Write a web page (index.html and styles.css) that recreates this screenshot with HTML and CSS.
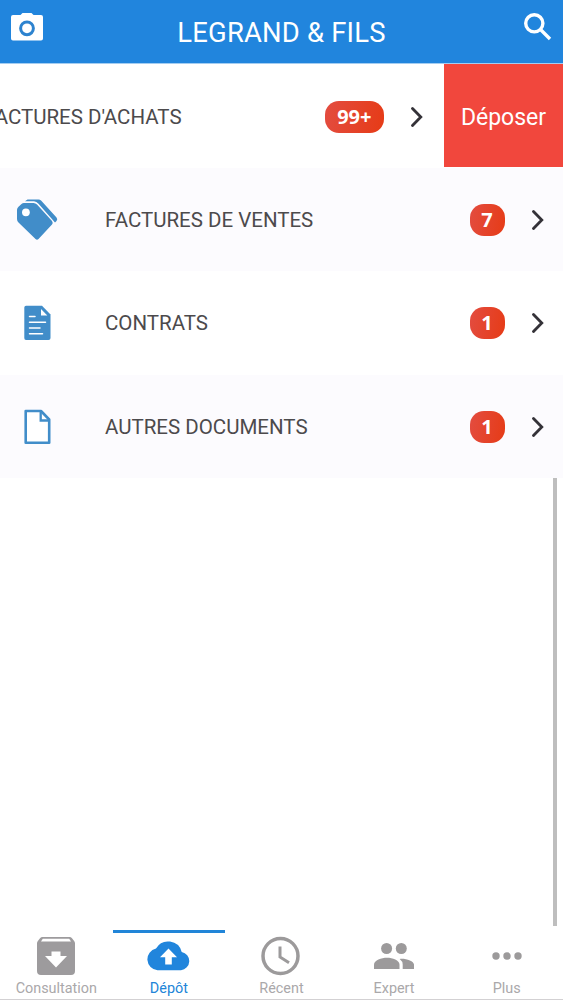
FILE: index.html
```
<!DOCTYPE html>
<html lang="fr">
<head>
    <meta charset="UTF-8">
    <meta name="viewport" content="width=device-width, initial-scale=1.0">
    <title>Legrand & Fils</title>
    <link rel="stylesheet" href="styles.css">
</head>
<body>
    <div class="app">
        <header class="header">
            <svg class="camera" viewBox="0 0 32 28">
                <path fill="#fff" d="M2 2H9.500L11.500 0H20.500L22.500 2H30Q32 2 32 4V25.500Q32 27.500 30 27.500H2Q0 27.500 0 25.500V4Q0 2 2 2Z"/>
                <circle cx="16" cy="15.300" r="6.400" fill="none" stroke="#2d83cf" stroke-width="3"/>
            </svg>
            <h1>LEGRAND &amp; FILS</h1>
            <svg class="search" viewBox="0 0 28 28">
                <circle cx="10.300" cy="10.300" r="8.600"/>
                <path d="M16.500 16.500L26 26"/>
            </svg>
        </header>

        <main class="content">
            <div class="row swiped">
                <div class="icon"></div>
                <span class="label">FACTURES D'ACHATS</span>
                <span class="badge">99+</span>
                <svg class="arrow" viewBox="0 0 12 20"><path d="M1.500 1.500L9.800 10L1.500 18.500"/></svg>
                <a class="drop">Déposer</a>
            </div>
            <div class="row">
                <div class="icon">
                    <svg width="42" height="42" viewBox="0 0 42 42">
                        <path fill="#418dc9" d="M9 2.200L11.500 .4H22.500Q24 .4 25.300 1.700L40.500 18.500Q42 20.300 40.500 22L39 23.500L22.500 4.700Q20.500 2.200 18 2.200Z"/>
                        <path fill="#418dc9" d="M8 4H17.500Q19.500 4 21 5.500L36 22Q37.500 24 36 25.500L22.500 40Q21 41.500 19.500 40L2.500 23.500Q1 22 1 20V11Q1 9 2.500 7.800L5.500 5Q6.500 4 8 4Z"/>
                        <circle cx="9.900" cy="13.300" r="3.900" fill="#fff"/>
                    </svg>
                </div>
                <span class="label">FACTURES DE VENTES</span>
                <span class="badge">7</span>
                <svg class="arrow" viewBox="0 0 12 20"><path d="M1.500 1.500L9.800 10L1.500 18.500"/></svg>
            </div>
            <div class="row">
                <div class="icon">
                    <svg width="27" height="36" viewBox="0 0 27 36">
                        <path fill="#418dc9" d="M2 .8H18L26.500 9.500V33Q26.500 35 24.500 35H2Q.3 35 .3 33V2.800Q.3 .8 2 .8Z"/>
                        <path fill="#fff" d="M17 4V10.500H23.300Z"/>
                        <path fill="none" stroke="#fff" stroke-width="1.500" stroke-linecap="round" d="M5.500 11.500H11M5.500 17.300H21.500M5.500 23H16M5.500 28.700H18.500"/>
                    </svg>
                </div>
                <span class="label">CONTRATS</span>
                <span class="badge">1</span>
                <svg class="arrow" viewBox="0 0 12 20"><path d="M1.500 1.500L9.800 10L1.500 18.500"/></svg>
            </div>
            <div class="row">
                <div class="icon">
                    <svg width="27" height="36" viewBox="0 0 27 36">
                        <path fill="#fff" stroke="#418dc9" stroke-width="2.600" stroke-linejoin="round" d="M1.700 2H17L25.200 10.500V33.700H1.700Z"/>
                        <path fill="none" stroke="#418dc9" stroke-width="2.300" d="M16.700 2.500V11.500H25"/>
                    </svg>
                </div>
                <span class="label">AUTRES DOCUMENTS</span>
                <span class="badge">1</span>
                <svg class="arrow" viewBox="0 0 12 20"><path d="M1.500 1.500L9.800 10L1.500 18.500"/></svg>
            </div>
            <div class="scrollbar"></div>
        </main>

        <nav class="tabs">
            <a class="tab">
                <svg width="38" height="38" viewBox="0 0 38 38">
                    <path fill="#9d9b9d" fill-rule="evenodd" d="M5.500 0H32.500Q34 0 35 1.300L37.300 4.300Q38 5.200 38 6.500V34Q38 38 34 38H4Q0 38 0 34V6.500Q0 5.200 .7 4.300L3 1.300Q4 0 5.500 0ZM5.800 1.800L4 4.500H34L32.200 1.800ZM14.500 14.500V19H8L19 30.500L30 19H23.500V14.500Z"/>
                </svg>
                <span>Consultation</span>
            </a>
            <a class="tab active">
                <svg width="44" height="30" viewBox="0 0 44 30">
                    <path fill="#2185dc" d="M34.700 11A14 14 0 0 0 9 7.500A11 11 0 0 0 10.500 29.200H34A9.200 9.200 0 0 0 34.700 11Z"/>
                    <path fill="#fff" d="M21.500 7.500L30 16.300H24.800V23.500H18.200V16.300H13Z"/>
                </svg>
                <span>Dépôt</span>
            </a>
            <a class="tab">
                <svg width="40" height="40" viewBox="0 0 40 40" fill="none" stroke="#9c9a9b">
                    <circle cx="19.500" cy="20" r="17.500" stroke-width="3.500"/>
                    <path stroke-width="3" d="M19 10.500V21L28 26.700"/>
                </svg>
                <span>Récent</span>
            </a>
            <a class="tab">
                <svg width="40" height="26" viewBox="0 0 40 26" fill="#9c9a9b">
                    <circle cx="12.600" cy="5.500" r="5.500"/>
                    <circle cx="27.300" cy="5.500" r="5.500"/>
                    <path d="M0 26V21.500C0 17.500 7.500 14.800 13 14.800S25.500 17.500 25.500 21.500V26Z"/>
                    <path d="M28.700 26V21.500Q28.700 18.200 25.700 15.900C31 15 40 18 40 21.500V26Z"/>
                </svg>
                <span>Expert</span>
            </a>
            <a class="tab">
                <svg width="30" height="8" viewBox="0 0 30 8" fill="#9c9a9b">
                    <circle cx="4" cy="4" r="3.700"/>
                    <circle cx="15" cy="4" r="3.700"/>
                    <circle cx="26" cy="4" r="3.700"/>
                </svg>
                <span>Plus</span>
            </a>
        </nav>
    </div>
</body>
</html>
```
FILE: styles.css
```
*{
    margin: 0;
    padding: 0;
    box-sizing: border-box;
}
body{
    font-family: Roboto, "Liberation Sans", sans-serif;
    background-color: #fff;
}
.app{
    display: flex;
    flex-direction: column;
    height: 1000px;
    overflow: hidden;
}
.header{
    display: flex;
    justify-content: space-between;
    align-items: flex-start;
    flex: none;
    height: 64px;
    padding: 13px 11px 0;
    background-color: #2185dd;
    border-bottom: 1px solid #a4cdf1;
}
.header h1{
    margin-right: 4px;
    color: #fff;
    font-size: 27.4px;
    font-weight: 400;
    line-height: 40px;
    letter-spacing: .2px;
}
.camera{
    width: 32px;
    height: 28px;
}
.search{
    width: 28px;
    height: 28px;
    fill: none;
    stroke: #fff;
    stroke-width: 3.4;
}
.content{
    display: flex;
    flex-direction: column;
    flex: 1;
}
.row{
    display: flex;
    align-items: center;
    flex: none;
    height: 103.5px;
    padding-top: 1px;
    padding-right: 19px;
}
.row:nth-child(even){
    background-color: #fcfbfe;
}
.icon{
    display: flex;
    justify-content: center;
    flex: none;
    width: 74px;
    margin-right: 31px;
}
.label{
    flex: 1;
    color: #4c4a4c;
    font-size: 20.5px;
    line-height: 28px;
    white-space: nowrap;
}
.badge{
    min-width: 35px;
    height: 32px;
    padding: 0 11px;
    border-radius: 14px;
    background: linear-gradient(100deg, #e34c40, #e63b16);
    color: #fff;
    font-family: "Noto Sans", sans-serif;
    font-size: 20px;
    font-weight: 700;
    line-height: 32px;
    text-align: center;
}
.arrow{
    width: 12px;
    height: 20px;
    margin-left: 27.5px;
    fill: none;
    stroke: #343238;
    stroke-width: 2.8;
    stroke-linecap: round;
}
/* row dragged to the left, the action comes in from the right */
.swiped{
    width: 683px;
    margin-left: -120px;
    padding-top: 0;
    padding-right: 0;
}
.swiped .label,
.swiped .badge,
.swiped .arrow{
    margin-top: 2px;
}
.swiped .badge{
    padding: 0 12px;
}
.drop{
    width: 119px;
    height: 103px;
    margin-left: 21px;
    background-color: #f1473d;
    color: #fff;
    font-size: 23px;
    line-height: 107px;
    text-align: center;
}
.scrollbar{
    flex: 1;
    align-self: flex-end;
    width: 4px;
    margin-right: 6px;
    margin-bottom: 4px;
    background-color: #bebebe;
}
.tabs{
    display: flex;
    flex: none;
    height: 70px;
    border-bottom: 1px solid #d3d1d3;
}
.tab{
    display: flex;
    flex: 1;
    flex-direction: column;
    align-items: center;
    border-top: 3px solid transparent;
    color: #aaa8aa;
    font-size: 14.4px;
}
.tab svg{
    flex: none;
    margin: auto 0;
}
.tab span{
    height: 20px;
    line-height: 19px;
}
.active{
    border-top-color: #2185d8;
    color: #2185d8;
}
```
